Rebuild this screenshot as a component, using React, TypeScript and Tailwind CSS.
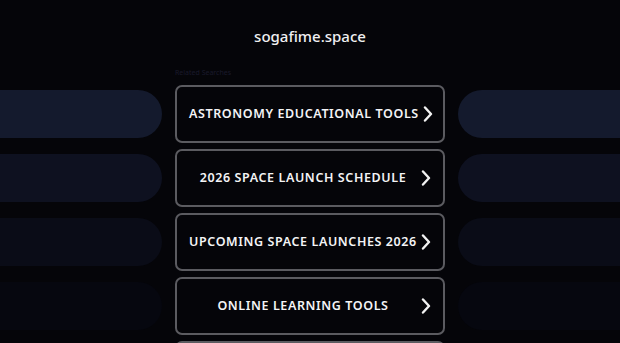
import React from "react";

const items = [
  "ASTRONOMY EDUCATIONAL TOOLS",
  "2026 SPACE LAUNCH SCHEDULE",
  "UPCOMING SPACE LAUNCHES 2026",
  "ONLINE LEARNING TOOLS",
];

const pillColors = ["#141a2d", "#0e1120", "#0a0c17", "#06070f", "#0a0d1b"];

function Chevron() {
  return (
    <svg width="10" height="16" viewBox="0 0 10 16" className="shrink-0">
      <polyline points="2,1.5 8,8 2,14.5" fill="none" stroke="#f2f2f2" strokeWidth="2.4" strokeLinecap="round" strokeLinejoin="round" />
    </svg>
  );
}

export default function App() {
  return (
    <div className="w-[620px] h-[343px] overflow-hidden bg-[#050509]" style={{ fontFamily: '"Noto Sans", sans-serif' }}>
      <div className="h-[73px] flex items-start justify-center pt-[26px]">
        <div className="text-[15px] font-medium text-[#f0f0f2] leading-[20px]">sogafime.space</div>
      </div>
      <div className="flex gap-[13px]">
        <div className="w-[162px] flex flex-col gap-[6px] pt-[12px]">
          {pillColors.map((c, i) => (
            <div key={i} className="h-[58px] flex items-center">
              <div className="h-[48px] w-full rounded-r-full" style={{ backgroundColor: c }} />
            </div>
          ))}
        </div>
        <div className="w-[270px] flex flex-col">
          <div className="h-[12px] text-[7px] leading-[8px] text-[#1a1a2c] -mt-[4px] mb-[4px]">Related Searches</div>
          <div className="flex flex-col gap-[6px]">
            {items.map((t, i) => (
              <div key={i} className="h-[58px] rounded-[7px] border-2 border-[#5b5b60] flex items-center pl-[12px] pr-[12px] gap-[4px]">
                <div className="flex-1 text-center text-[#f4f4f6] font-semibold text-[12.5px] tracking-[0.6px] whitespace-nowrap">{t}</div>
                <Chevron />
              </div>
            ))}
            <div className="h-[58px] rounded-[7px] border-2 border-[#5b5b60]" />
          </div>
        </div>
        <div className="w-[162px] flex flex-col gap-[6px] pt-[12px]">
          {pillColors.map((c, i) => (
            <div key={i} className="h-[58px] flex items-center">
              <div className="h-[48px] w-full rounded-l-full" style={{ backgroundColor: c }} />
            </div>
          ))}
        </div>
      </div>
    </div>
  );
}
